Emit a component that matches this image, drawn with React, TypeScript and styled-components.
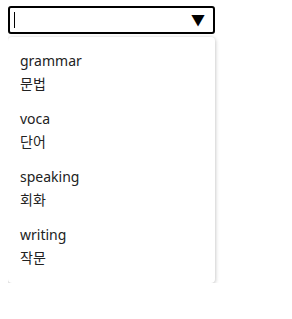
import React from "react";
import styled, { createGlobalStyle } from "styled-components";

const Global = createGlobalStyle`
  body { margin: 6px 8px 8px; background: #fff; font-family: "Noto Sans", "Noto Sans CJK KR", sans-serif; }
`;

const Wrapper = styled.div`
  width: 207px;
`;

const Field = styled.div`
  box-sizing: border-box;
  height: 28px;
  border: 2px solid #000;
  border-radius: 3px;
  display: flex;
  align-items: center;
  padding: 0 8px 0 4px;
`;

const Caret = styled.span`
  width: 1px;
  height: 16px;
  background: #000;
`;

const Arrow = styled.span`
  margin-left: auto;
  font-size: 14px;
  line-height: 1;
  color: #000;
`;

const Menu = styled.ul`
  list-style: none;
  margin: 3px 0 0;
  padding: 6px 0 8px;
  background: #fff;
  border-radius: 4px;
  box-shadow: 0 1px 4px rgba(0, 0, 0, 0.3);
`;

const Item = styled.li`
  padding: 6px 12px;
  font-size: 14px;
  line-height: 23px;
  color: #222;
`;

const Line = styled.div``;

const items = [
  ["grammar", "문법"],
  ["voca", "단어"],
  ["speaking", "회화"],
  ["writing", "작문"],
];

export default function App() {
  return (
    <>
      <Global />
      <Wrapper>
        <Field>
          <Caret />
          <Arrow>▼</Arrow>
        </Field>
        <Menu>
          {items.map(([en, ko]) => (
            <Item key={en}>
              <Line>{en}</Line>
              <Line>{ko}</Line>
            </Item>
          ))}
        </Menu>
      </Wrapper>
    </>
  );
}
